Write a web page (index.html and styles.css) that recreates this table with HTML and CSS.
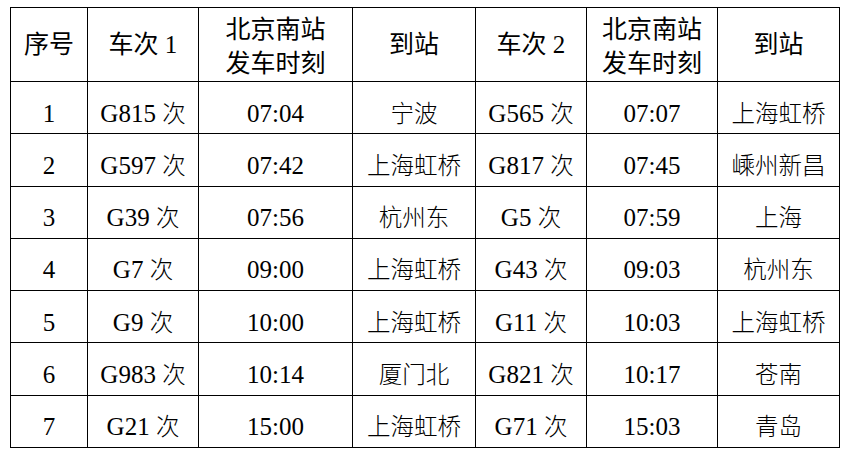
FILE: index.html
```html
<!DOCTYPE html>
<html lang="zh-CN">
<head>
<meta charset="utf-8">
<title>北京南站发车时刻</title>
<link rel="stylesheet" href="styles.css">
</head>
<body>
<div class="page">
<table class="timetable">
  <colgroup>
    <col class="c-no"><col class="c-train1"><col class="c-time1"><col class="c-dest1">
    <col class="c-train2"><col class="c-time2"><col class="c-dest2">
  </colgroup>
  <thead>
    <tr class="head-row">
      <th>序号</th>
      <th>车次 1</th>
      <th class="two">北京南站<br>发车时刻</th>
      <th>到站</th>
      <th>车次 2</th>
      <th class="two">北京南站<br>发车时刻</th>
      <th>到站</th>
    </tr>
  </thead>
  <tbody>
    <tr><td>1</td><td>G815 <span class="zh">次</span></td><td>07:04</td><td><span class="zh">宁波</span></td><td>G565 <span class="zh">次</span></td><td>07:07</td><td><span class="zh">上海虹桥</span></td></tr>
    <tr><td>2</td><td>G597 <span class="zh">次</span></td><td>07:42</td><td><span class="zh">上海虹桥</span></td><td>G817 <span class="zh">次</span></td><td>07:45</td><td><span class="zh">嵊州新昌</span></td></tr>
    <tr><td>3</td><td>G39 <span class="zh">次</span></td><td>07:56</td><td><span class="zh">杭州东</span></td><td>G5 <span class="zh">次</span></td><td>07:59</td><td><span class="zh">上海</span></td></tr>
    <tr><td>4</td><td>G7 <span class="zh">次</span></td><td>09:00</td><td><span class="zh">上海虹桥</span></td><td>G43 <span class="zh">次</span></td><td>09:03</td><td><span class="zh">杭州东</span></td></tr>
    <tr><td>5</td><td>G9 <span class="zh">次</span></td><td>10:00</td><td><span class="zh">上海虹桥</span></td><td>G11 <span class="zh">次</span></td><td>10:03</td><td><span class="zh">上海虹桥</span></td></tr>
    <tr><td>6</td><td>G983 <span class="zh">次</span></td><td>10:14</td><td><span class="zh">厦门北</span></td><td>G821 <span class="zh">次</span></td><td>10:17</td><td><span class="zh">苍南</span></td></tr>
    <tr><td>7</td><td>G21 <span class="zh">次</span></td><td>15:00</td><td><span class="zh">上海虹桥</span></td><td>G71 <span class="zh">次</span></td><td>15:03</td><td><span class="zh">青岛</span></td></tr>
  </tbody>
</table>
</div>
</body>
</html>
```
FILE: styles.css
```css
html, body {
  margin: 0;
  padding: 0;
  background: #ffffff;
}

.page {
  padding: 7px 0 0 10px;
}

.timetable {
  border-collapse: collapse;
  table-layout: fixed;
  width: 830px;
  font-family: "Liberation Serif", "Noto Sans CJK SC", serif;
  font-size: 25px;
  color: #000000;
}

.c-no { width: 77px; }
.c-train1 { width: 111px; }
.c-time1 { width: 154px; }
.c-dest1 { width: 123px; }
.c-train2 { width: 111px; }
.c-time2 { width: 131px; }
.c-dest2 { width: 122px; }

.timetable tr {
  height: 52.25px;
}

.timetable tr.head-row {
  height: 74px;
}

.timetable th,
.timetable td {
  border: 1px solid #000000;
  text-align: center;
  vertical-align: middle;
  padding: 0;
  white-space: nowrap;
}

.timetable th {
  font-weight: normal;
  line-height: 30px;
}

.timetable th.two {
  line-height: 34px;
  padding-top: 4px;
}

.timetable td {
  line-height: 28px;
  padding-top: 12px;
}

.zh {
  font-size: 23.5px;
  font-weight: 300;
}
```
